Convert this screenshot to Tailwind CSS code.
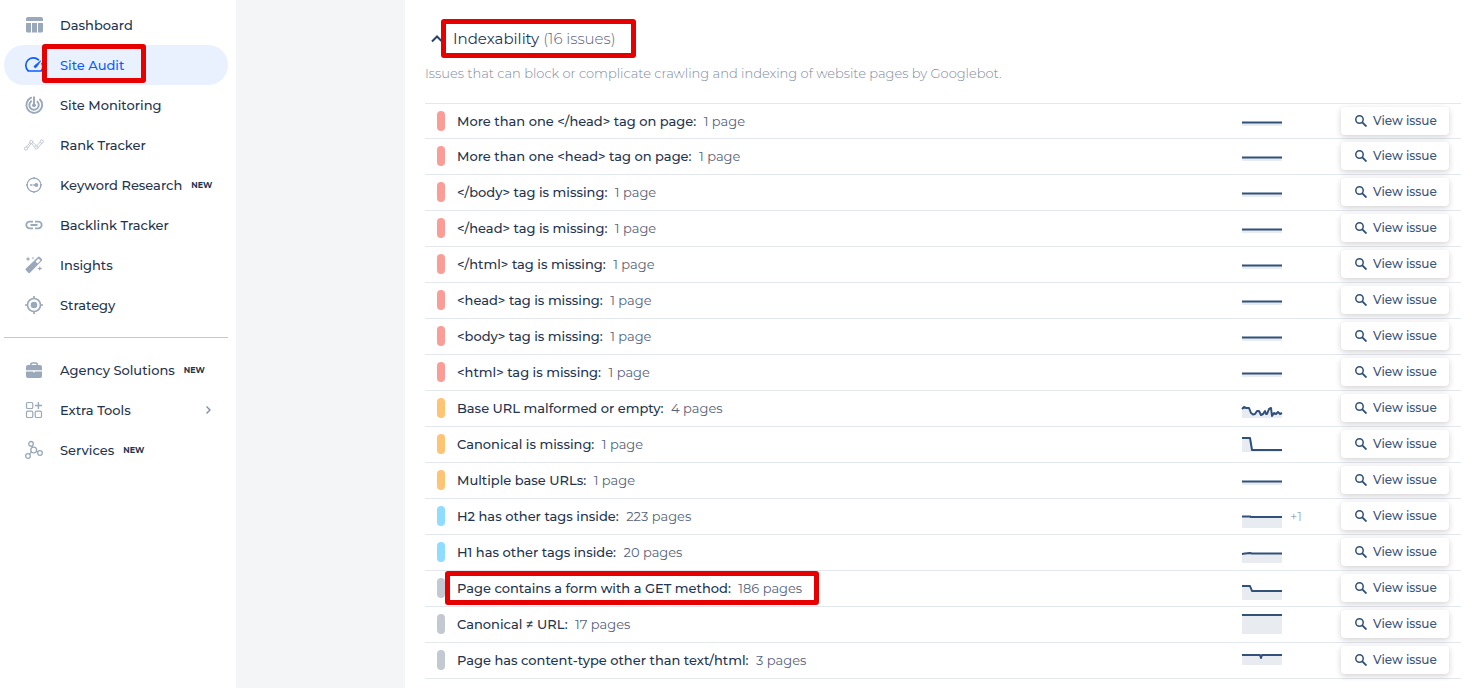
<!DOCTYPE html>
<html lang="en">
<head>
    <meta charset="UTF-8">
    <meta name="viewport" content="width=device-width, initial-scale=1.0">
    <script src="https://cdn.jsdelivr.net/npm/@tailwindcss/browser@4"></script>
    <title>Site Audit</title>
</head>
<body class="flex min-h-screen bg-white pb-px font-['Montserrat','Inter',sans-serif] text-[#24344f]">
    <aside class="w-[236px] shrink-0 px-1 pt-[5px] text-[13px] leading-5 font-medium">
        <nav class="mr-1">
            <a href="#" class="flex h-10 items-center gap-4 rounded-full pl-5">
                <svg class="size-5 text-[#9aa8bb]" viewBox="0 0 20 20" fill="currentColor"><path d="M2 4a2 2 0 0 1 2-2h13a2 2 0 0 1 2 2v2H2zM2 8h5v9.500H3.500A1.500 1.500 0 0 1 2 16zM8 8h5v9.500H8zM14 8h5v8a1.500 1.500 0 0 1-1.500 1.500H14z"/></svg>
                Dashboard
            </a>
            <a href="#" class="relative flex h-10 items-center gap-4 rounded-full bg-[#e9f1ff] pl-5 text-[#0b5cff]">
                <svg class="size-5" viewBox="0 0 20 20" fill="none" stroke="currentColor" stroke-width="1.700" stroke-linecap="round" stroke-linejoin="round"><path d="M14.500 4.800A7.400 7.400 0 0 0 4.300 16h12.900a7.400 7.400 0 0 0 .8-7.500"/><path d="M16.500 6l-6 4.700a1.200 1.200 0 1 0 1.800 1.600z" fill="currentColor" stroke-width=".8"/></svg>
                Site Audit
                <span class="absolute -top-px left-[38px] h-[39px] w-[104px] rounded-[3px] border-5 border-[#e60000]"></span>
            </a>
            <a href="#" class="flex h-10 items-center gap-4 rounded-full pl-5">
                <svg class="size-5 text-[#9aa8bb]" viewBox="0 0 20 20" fill="none" stroke="currentColor" stroke-width="1.900" stroke-linecap="round"><path d="M10 2.300v8.200M16 4.500A7.900 7.900 0 1 1 7.200 2.700M13.300 6.600A4.700 4.700 0 1 1 7.200 6.300"/><circle cx="10" cy="10.300" r="1.500" fill="currentColor" stroke-width="1"/></svg>
                Site Monitoring
            </a>
            <a href="#" class="flex h-10 items-center gap-4 rounded-full pl-5">
                <svg class="size-5 overflow-visible text-[#b4bcc9]" viewBox="0 0 20 20" fill="none" stroke="currentColor" stroke-width=".8"><circle cx="2" cy="13.500" r="1.600"/><circle cx="7.300" cy="7" r="1.600"/><circle cx="12.400" cy="12.500" r="1.600"/><circle cx="17.800" cy="6.500" r="1.600"/><path d="M2.600 11.800l3.300-4.100M3.600 13.200l3.600-4.600M8.900 7.300l3.500 3.500M7.600 8.700l3.200 3.700M12.600 10.900l3.700-4M13.900 12.900l4-4.800"/></svg>
                Rank Tracker
            </a>
            <a href="#" class="flex h-10 items-center gap-4 rounded-full pl-5">
                <svg class="size-5 text-[#9aa8bb]" viewBox="0 0 20 20" fill="none" stroke="currentColor" stroke-width="1.300"><circle cx="10" cy="10" r="6.900"/><path d="M10 2v2M10 16v2M2 10h2M16 10h2"/><path d="M6 10h2.500M9.300 10h3" stroke-width="1.500"/><circle cx="12.300" cy="10" r="2" fill="currentColor" stroke="none"/></svg>
                <span class="flex items-center gap-[9px]">Keyword Research <b class="text-[8px]">NEW</b></span>
            </a>
            <a href="#" class="flex h-10 items-center gap-4 rounded-full pl-5">
                <svg class="size-5 text-[#9aa8bb]" viewBox="0 0 20 20" fill="none" stroke="currentColor" stroke-width="1.800"><path d="M9 6.700H5.600a3.300 3.300 0 0 0 0 6.600H9M11 6.700h3.400a3.300 3.300 0 0 1 0 6.600H11M6.500 10h7"/></svg>
                Backlink Tracker
            </a>
            <a href="#" class="flex h-10 items-center gap-4 rounded-full pl-5">
                <svg class="size-5 text-[#9aa8bb]" viewBox="0 0 20 20" fill="currentColor"><path fill-rule="evenodd" d="M1.900 15.300a1.200 1.200 0 0 1 0-1.700L14 2a1.300 1.300 0 0 1 1.800 0l2 2a1.300 1.300 0 0 1 0 1.800L6 17.800a1.200 1.200 0 0 1-1.700 0zM11.500 6.400l2 2 3-3-2-2z"/><path d="M4 1.500l.7 1.800 1.800.7-1.800.7L4 6.500l-.7-1.800L1.500 4l1.800-.7zM15.800 11l.7 1.800 1.800.7-1.800.7-.7 1.800-.7-1.800-1.800-.7 1.800-.7zM9 1.800l.4.900.9.400-.9.400-.4.900-.4-.9-.9-.4.900-.4z"/></svg>
                Insights
            </a>
            <a href="#" class="flex h-10 items-center gap-4 rounded-full pl-5">
                <svg class="size-5 text-[#9aa8bb]" viewBox="0 0 20 20" fill="none" stroke="currentColor" stroke-width="1.700"><circle cx="10" cy="10" r="6.500"/><circle cx="10" cy="10" r="3.300" fill="currentColor" stroke="none"/><path d="M10 1v2.500M10 16.500V19M1 10h2.500M16.500 10H19"/></svg>
                Strategy
            </a>
            <hr class="mt-3 mb-3 border-[#bfc8d6]">
            <a href="#" class="flex h-10 items-center gap-4 rounded-full pl-5">
                <svg class="size-5 text-[#9aa8bb]" viewBox="0 0 20 20" fill="currentColor"><path d="M6 5.200a2.600 2.600 0 0 1 2.600-2.900h2.800A2.600 2.600 0 0 1 14 5.200h-1.500a1.200 1.200 0 0 0-1.200-1.500H8.700a1.200 1.200 0 0 0-1.200 1.500z"/><path d="M2 7a2 2 0 0 1 2-2h12a2 2 0 0 1 2 2v3.300H2zM2 11.400h7v.8h2v-.8h7V16a2 2 0 0 1-2 2H4a2 2 0 0 1-2-2z"/></svg>
                <span class="flex items-center gap-[9px]">Agency Solutions <b class="text-[8px]">NEW</b></span>
            </a>
            <a href="#" class="flex h-10 items-center gap-4 rounded-full pr-4 pl-5">
                <svg class="size-5 text-[#9aa8bb]" viewBox="0 0 20 20" fill="none" stroke="currentColor" stroke-width="1.200"><rect x="2.500" y="2.500" width="6.300" height="6" rx="1.300"/><rect x="2.500" y="11.200" width="6.300" height="6.300" rx="1.300"/><rect x="11.200" y="11.200" width="6.300" height="6.300" rx="1.300"/><path d="M14.400 2v7M11 5.500h7" stroke-width="1.400"/></svg>
                Extra Tools
                <svg class="ml-auto size-2" viewBox="0 0 8 8" fill="none" stroke="#7c8aa3" stroke-width="1.300"><path d="M2.500 .5L6 4 2.500 7.500"/></svg>
            </a>
            <a href="#" class="flex h-10 items-center gap-4 rounded-full pl-5">
                <svg class="size-5 text-[#9aa8bb]" viewBox="0 0 20 20" fill="none" stroke="currentColor" stroke-width="1.300"><circle cx="7" cy="3.800" r="2.300"/><circle cx="9.700" cy="10" r="2.900"/><circle cx="4" cy="16" r="2.300"/><circle cx="16" cy="13" r="2.300"/><path d="M7.900 5.900l.7 1.500M7.400 11.900l-1.900 2.400M12.400 11l1.500.8"/></svg>
                <span class="flex items-center gap-[9px]">Services <b class="text-[8px]">NEW</b></span>
            </a>
        </nav>
    </aside>

    <div class="w-[169px] shrink-0 bg-[#f4f5f7]"></div>

    <main class="grow pt-[27px] pr-3.5 pl-5">
        <h2 class="relative flex h-6 items-center text-[15px] text-[#1f3557]">
            <svg class="ml-1.5 mr-2.5 h-2 w-3" viewBox="0 0 12 8" fill="none" stroke="#24446f" stroke-width="2"><path d="M1 6.500l5-5 5 5"/></svg>
            <span>Indexability <span class="font-light text-[#56637f]">(16 issues)</span></span>
            <span class="absolute -top-2 left-4 h-[39px] w-[195px] rounded-[3px] border-5 border-[#e60000]"></span>
        </h2>
        <p class="mt-3 mb-5 text-[13px] leading-5 font-light text-[#7d899f]">Issues that can block or complicate crawling and indexing of website pages by Googlebot.</p>

        <table class="w-full border-separate border-spacing-0 text-left text-[13px]">
            <tbody id="issues">
                <!-- Rows are filled in by the script below -->
            </tbody>
        </table>
    </main>

    <script>
        var colors = {
            error: "bg-[#fa9d96]",
            warning: "bg-[#ffc374]",
            notice: "bg-[#8edcff]",
            info: "bg-[#c2c9d3]"
        };

        // line: points of the trend, base: y where the shaded area ends
        var flat = { line: "0,11.5 40,11.5", base: 15 };

        var issues = [
            { level: "error", title: "More than one </head> tag on page:", count: "1 page", trend: flat },
            { level: "error", title: "More than one <head> tag on page:", count: "1 page", trend: flat },
            { level: "error", title: "</body> tag is missing:", count: "1 page", trend: flat },
            { level: "error", title: "</head> tag is missing:", count: "1 page", trend: flat },
            { level: "error", title: "</html> tag is missing:", count: "1 page", trend: flat },
            { level: "error", title: "<head> tag is missing:", count: "1 page", trend: flat },
            { level: "error", title: "<body> tag is missing:", count: "1 page", trend: flat },
            { level: "error", title: "<html> tag is missing:", count: "1 page", trend: flat },
            { level: "warning", title: "Base URL malformed or empty:", count: "4 pages", trend: { line: "0,11 2,9 4,10 7,10 9,15 11,16.5 13,16 15,13 17,13 19,17 21,16 23,13 24,16 25,16 27,11 29,10 30,18 32,15 34,16 36,14 38,16 40,15", base: 20 } },
            { level: "warning", title: "Canonical is missing:", count: "1 page", trend: { line: "0,4 8,4 10,16 40,16", base: 18 } },
            { level: "warning", title: "Multiple base URLs:", count: "1 page", trend: flat },
            { level: "notice", title: "H2 has other tags inside:", count: "223 pages", trend: { line: "0,10.5 8,10.5 9,11 40,11", base: 22 }, delta: "+1" },
            { level: "notice", title: "H1 has other tags inside:", count: "20 pages", trend: { line: "0,12 3,11.5 8,11 10,11.5 40,11.5", base: 21 } },
            { level: "info", title: "Page contains a form with a GET method:", count: "186 pages", trend: { line: "0,8 8,8 10,13 40,13", base: 22 }, marked: true },
            { level: "info", title: "Canonical ≠ URL:", count: "17 pages", trend: { line: "0,1 40,1", base: 20 } },
            { level: "info", title: "Page has content-type other than text/html:", count: "3 pages", trend: { line: "0,5 18,5 19,8 20,5 40,5", base: 15 } }
        ];

        function escapeHtml(text) {
            return text.replace(/</g, "&lt;").replace(/>/g, "&gt;");
        }

        document.getElementById("issues").innerHTML = issues.map((issue, i) => {
            var cell = "h-9 border-b border-[#e3e7ee] p-0 pb-px align-middle" + (i === 0 ? " border-t" : "");
            var mark = issue.marked ? `<span class="absolute -top-[7px] -left-3 h-[34px] w-[374px] rounded-[3px] border-5 border-[#e60000]"></span>` : "";
            return `
                <tr>
                    <td class="${cell} w-8 pl-3"><span class="block h-5 w-2 rounded-full ${colors[issue.level]}"></span></td>
                    <td class="${cell}">
                        <div class="relative leading-5 font-medium">${escapeHtml(issue.title)} <span class="ml-1 font-normal text-[#56637a]">${issue.count}</span>${mark}</div>
                    </td>
                    <td class="${cell} w-[99px]">
                        <div class="flex items-center gap-2 leading-5 font-light text-[#7d899f]">
                            <svg class="h-5 w-10 overflow-visible" viewBox="0 0 40 20">
                                <polygon fill="#e8ecf0" points="0,${issue.trend.base} ${issue.trend.line} 40,${issue.trend.base}"/>
                                <polyline fill="none" stroke="#31507a" stroke-width="2" stroke-linejoin="round" points="${issue.trend.line}"/>
                            </svg>
                            ${issue.delta || ""}
                        </div>
                    </td>
                    <td class="${cell} w-[120px]">
                        <button type="button" class="flex h-7 w-[108px] items-center gap-1.5 rounded bg-white pl-3.5 text-xs font-medium text-[#3d5578] shadow-[0_2px_6px_rgba(0,0,0,0.18)]">
                            <svg class="size-3" viewBox="0 0 12 12" fill="none" stroke="#31507a" stroke-width="1.500"><circle cx="4.500" cy="4.500" r="3.700"/><path d="M7.300 7.300L11.500 11.500" stroke-width="1.900"/></svg>
                            View issue
                        </button>
                    </td>
                </tr>`;
        }).join("");
    </script>
</body>
</html>
